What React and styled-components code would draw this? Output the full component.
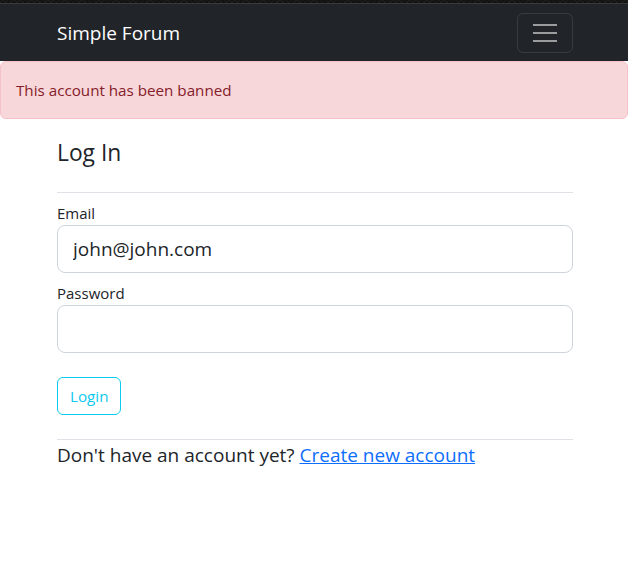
import React from "react";
import styled, { createGlobalStyle } from "styled-components";

const Global = createGlobalStyle`
  * { box-sizing: border-box; }
  html, body { margin: 0; padding: 0; background: #fff; }
  body {
    font-family: "Open Sans", "Noto Sans", Arial, sans-serif;
    font-size: 15.2px;
    line-height: 1.5;
    color: #212529;
  }
`;

const TopStrip = styled.div`
  height: 4px;
  background-color: #111;
  background-image: repeating-linear-gradient(45deg, #1c1c1c 0 1px, transparent 1px 4px),
    repeating-linear-gradient(-45deg, #1c1c1c 0 1px, transparent 1px 4px);
  border-bottom: 1px solid #3a3a3a;
`;

const Navbar = styled.nav`
  background: #212529;
  height: 57px;
  display: flex;
  align-items: center;
`;

const Container = styled.div`
  width: 540px;
  margin: 0 auto;
  padding: 0 11px 0 13px;
`;

const NavInner = styled(Container)`
  display: flex;
  align-items: center;
  justify-content: space-between;
`;

const Brand = styled.a`
  color: #fff;
  font-size: 19px;
  line-height: 30px;
  text-decoration: none;
`;

const Toggler = styled.button`
  width: 56px;
  height: 40px;
  border: 1px solid rgba(255, 255, 255, 0.1);
  border-radius: 6px;
  background: transparent;
  display: flex;
  flex-direction: column;
  align-items: center;
  justify-content: center;
  gap: 6px;
  padding: 0;
`;

const Bar = styled.span`
  display: block;
  width: 24px;
  height: 2px;
  background: rgba(255, 255, 255, 0.55);
`;

const Alert = styled.div`
  background: #f8d7da;
  border: 1px solid #f5c2c7;
  border-radius: 6px;
  color: #842029;
  padding: 16px 15px;
  line-height: 24px;
  font-size: 15.2px;
`;

const Heading = styled.h4`
  margin: 20px 0 0;
  font-size: 22.8px;
  font-weight: 400;
  line-height: 28.8px;
`;

const Rule = styled.hr`
  border: 0;
  border-top: 1px solid #dee2e6;
  margin: ${(p) => p.$top}px 0 ${(p) => p.$bottom}px;
`;

const Label = styled.label`
  display: block;
  font-size: 15px;
  line-height: 24px;
  color: #212529;
  margin-top: ${(p) => p.$top || 0}px;
`;

const Input = styled.input`
  display: block;
  width: 100%;
  height: 48px;
  padding: 8px 15px;
  font-family: inherit;
  font-size: 19px;
  color: #212529;
  border: 1px solid #ced4da;
  border-radius: 8px;
  background: #fff;
  outline: none;
`;

const Button = styled.button`
  margin-top: 24px;
  height: 38px;
  padding: 0 12px;
  border: 1px solid #0dcaf0;
  border-radius: 6px;
  background: transparent;
  color: #0dcaf0;
  font-family: inherit;
  font-size: 15.2px;
  line-height: 24px;
`;

const Footer = styled.p`
  margin: 0;
  font-size: 19px;
  line-height: 30px;
`;

const Link = styled.a`
  color: #0d6efd;
  text-decoration: underline;
`;

export default function App() {
  return (
    <>
      <Global />
      <TopStrip />
      <Navbar>
        <NavInner>
          <Brand href="#">Simple Forum</Brand>
          <Toggler aria-label="Toggle navigation">
            <Bar />
            <Bar />
            <Bar />
          </Toggler>
        </NavInner>
      </Navbar>
      <Alert>This account has been banned</Alert>
      <Container>
        <Heading>Log In</Heading>
        <Rule $top={24} $bottom={8} />
        <form onSubmit={(e) => e.preventDefault()}>
          <Label htmlFor="email">Email</Label>
          <Input id="email" type="email" defaultValue="john@john.com" />
          <Label htmlFor="password" $top={8}>Password</Label>
          <Input id="password" type="password" />
          <Button type="submit">Login</Button>
        </form>
        <Rule $top={24} $bottom={0} />
        <Footer>
          Don't have an account yet? <Link href="#">Create new account</Link>
        </Footer>
      </Container>
    </>
  );
}
